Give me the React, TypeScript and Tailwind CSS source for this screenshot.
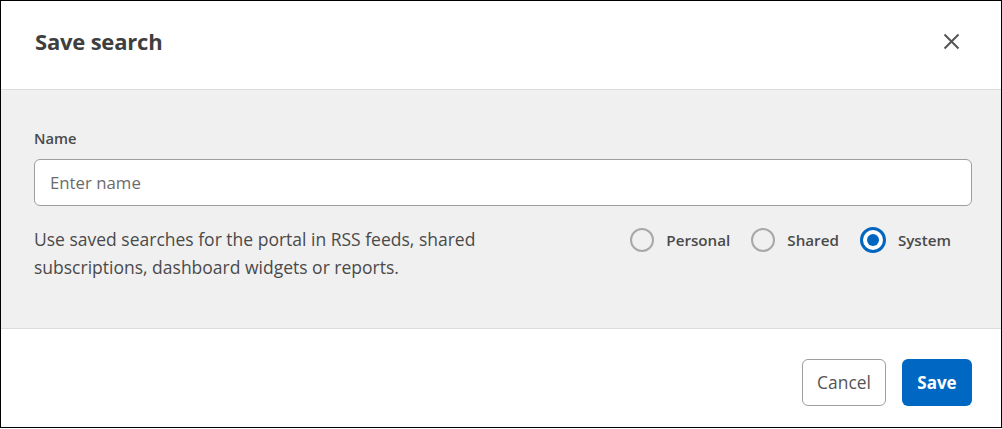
import React from "react";

export default function App() {
  const font = { fontFamily: "'Open Sans', 'Noto Sans', sans-serif" };
  return (
    <div className="w-[1002px] h-[428px] bg-white" style={font}>
      <div className="w-full h-full border border-black flex flex-col">
        <div className="h-[89px] border-b border-[#dcdcdc] flex items-center justify-between pl-[34px] pr-[41px] pb-[7px] shrink-0">
          <h1 className="text-[22px] font-bold text-[#3f3f3f] tracking-[-0.2px]">Save search</h1>
          <svg width="17" height="17" viewBox="0 0 17 17" className="text-[#555] mt-[-1px]">
            <path d="M1.5 1.5 L15.5 15.5 M15.5 1.5 L1.5 15.5" stroke="currentColor" strokeWidth="2" />
          </svg>
        </div>
        <div className="h-[239px] bg-[#f0f0f0] border-b border-[#dcdcdc] pl-[33px] pr-[29px] pt-[38px] shrink-0">
          <div className="text-[14.7px] font-semibold text-[#4a4a4a] leading-[20px]">Name</div>
          <div className="mt-[11px] h-[47px] bg-white border border-[#9e9e9e] rounded-[6px] flex items-center pl-[15px] text-[16.8px] text-[#6b6b6b]">
            Enter name
          </div>
          <div className="mt-[19px] flex justify-between">
            <p className="w-[480px] text-[17.5px] leading-[28px] text-[#4a4a4a]">
              Use saved searches for the portal in RSS feeds, shared subscriptions, dashboard widgets or reports.
            </p>
            <div className="flex items-center gap-[21px] h-[28px] mt-[1px] pr-[21px]">
              {[
                ["Personal", false],
                ["Shared", false],
                ["System", true],
              ].map(([label, sel]) => (
                <div key={label as string} className="flex items-center gap-[12px]">
                  {sel ? (
                    <div className="w-[26px] h-[26px] rounded-full border-[3px] border-[#0066c0] flex items-center justify-center bg-white">
                      <div className="w-[12px] h-[12px] rounded-full bg-[#0066c0]" />
                    </div>
                  ) : (
                    <div className="w-[24px] h-[24px] rounded-full border-2 border-[#a8a8a8] bg-[#f0f0f0]" />
                  )}
                  <span className="text-[15.2px] font-semibold text-[#4a4a4a]">{label as string}</span>
                </div>
              ))}
            </div>
          </div>
        </div>
        <div className="flex-1 flex items-start justify-end gap-[16px] pr-[29px] pt-[30px]">
          <button className="h-[47px] w-[84px] border border-[#9e9e9e] rounded-[6px] text-[17.4px] text-[#555] bg-white">
            Cancel
          </button>
          <button className="h-[47px] w-[70px] rounded-[6px] text-[17px] font-bold text-white bg-[#0068c2]">
            Save
          </button>
        </div>
      </div>
    </div>
  );
}
